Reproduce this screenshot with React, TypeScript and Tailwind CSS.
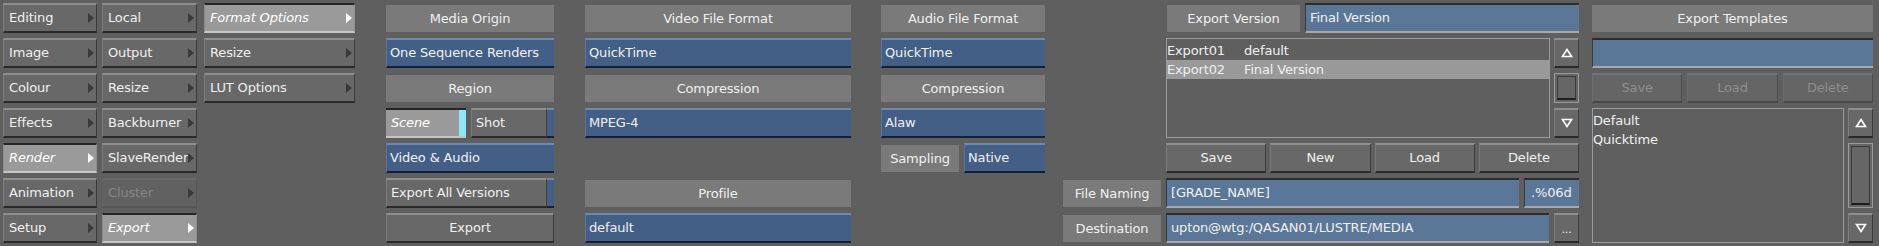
import type { ReactNode } from "react"

function Arrow({ light }: { light?: boolean }) {
  return (
    <span
      className={`h-0 w-0 shrink-0 border-y-[5px] border-l-[6px] border-y-transparent ${
        light ? "border-l-white" : "border-l-[#3a3a3a]"
      }`}
    />
  )
}

function MenuBtn({ label, state }: { label: string; state?: "on" | "off" }) {
  if (state === "on") {
    return (
      <div className="flex h-[30px] items-center justify-between border border-t-2 border-b-2 border-t-[#262626] border-l-[#8c8c8c] border-r-[#8c8c8c] border-b-[#c6c6c6] bg-[#9a9a9a] pl-[5px] pr-[2px] italic text-white">
        <span>{label}</span>
        <Arrow light />
      </div>
    )
  }
  if (state === "off") {
    return (
      <div className="flex h-[30px] items-center justify-between border border-t-2 border-b-2 border-t-[#6a6a6a] border-l-[#626262] border-r-[#565656] border-b-[#555555] bg-[#616161] pl-[5px] pr-[2px] text-[#868686]">
        <span>{label}</span>
        <Arrow />
      </div>
    )
  }
  return (
    <div className="flex h-[30px] items-center justify-between border border-t-2 border-b-2 border-t-[#8e8e8e] border-l-[#7c7c7c] border-r-[#3c3c3c] border-b-[#2a2a2a] bg-[#686868] pl-[5px] pr-[2px]">
      <span className="whitespace-nowrap">{label}</span>
      <Arrow />
    </div>
  )
}

function Btn({ children, className = "" }: { children?: ReactNode; className?: string }) {
  return (
    <div
      className={`flex h-[30px] items-center justify-center border border-t-2 border-b-2 border-t-[#8e8e8e] border-l-[#7c7c7c] border-r-[#3c3c3c] border-b-[#2a2a2a] bg-[#686868] ${className}`}
    >
      {children}
    </div>
  )
}

function DimBtn({ children }: { children: ReactNode }) {
  return (
    <div className="flex h-[30px] items-center justify-center border border-t-2 border-b-2 border-t-[#747474] border-l-[#6c6c6c] border-r-[#4c4c4c] border-b-[#484848] bg-[#656565] text-[#8e8e8e]">
      {children}
    </div>
  )
}

function Label({ children, className = "" }: { children: ReactNode; className?: string }) {
  return (
    <div className={`mt-[2px] mb-[1px] flex h-[27px] items-center justify-center bg-[#7a7a7a] ${className}`}>
      {children}
    </div>
  )
}

function Blue({ children, className = "" }: { children?: ReactNode; className?: string }) {
  return (
    <div
      className={`flex h-[30px] items-center border-t-2 border-b-2 border-l border-t-[#6f89ae] border-l-[#5a739a] border-b-[#14203a] bg-[#445f86] pl-[3px] ${className}`}
    >
      {children}
    </div>
  )
}

function Field({ children, className = "" }: { children?: ReactNode; className?: string }) {
  return (
    <div
      className={`flex h-[30px] items-center border-t-2 border-l border-b-2 border-t-[#2c2c2c] border-l-[#3a3a3a] border-b-[#a4a9b0] bg-[#5a7797] pl-[4px] ${className}`}
    >
      {children}
    </div>
  )
}

function Up() {
  return (
    <svg width="12" height="10" viewBox="0 0 12 10">
      <path d="M6 1.5 L10.5 8.5 H1.5 Z" fill="none" stroke="#ffffff" strokeWidth="1.6" />
    </svg>
  )
}

function Down() {
  return (
    <svg width="12" height="10" viewBox="0 0 12 10">
      <path d="M6 8.5 L10.5 1.5 H1.5 Z" fill="none" stroke="#ffffff" strokeWidth="1.6" />
    </svg>
  )
}

function Scroll() {
  return (
    <div className="flex h-full w-[25px] shrink-0 flex-col gap-[5px]">
      <Btn>
        <Up />
      </Btn>
      <div className="flex-1 border border-[#9a9a9a] bg-[#666666] p-[2px]">
        <div className="h-full border border-[#3a3a3a] border-b-2 border-b-[#1e1e1e] bg-[#666666]" />
      </div>
      <Btn>
        <Down />
      </Btn>
    </div>
  )
}

const Empty = () => <div className="h-[30px]" />

export default function App() {
  return (
    <div className="flex h-[246px] w-[1879px] overflow-hidden bg-[#5f5f5f] pl-[3px] pt-[3px] font-['DejaVu_Sans',sans-serif] text-[13px] tracking-[-0.15px] text-[#f0f0f0]">
      <div className="flex w-[94px] flex-col gap-[5px]">
        <MenuBtn label="Editing" />
        <MenuBtn label="Image" />
        <MenuBtn label="Colour" />
        <MenuBtn label="Effects" />
        <MenuBtn label="Render" state="on" />
        <MenuBtn label="Animation" />
        <MenuBtn label="Setup" />
      </div>

      <div className="ml-[5px] flex w-[95px] flex-col gap-[5px]">
        <MenuBtn label="Local" />
        <MenuBtn label="Output" />
        <MenuBtn label="Resize" />
        <MenuBtn label="Backburner" />
        <MenuBtn label="SlaveRender" />
        <MenuBtn label="Cluster" state="off" />
        <MenuBtn label="Export" state="on" />
      </div>

      <div className="ml-[7px] flex w-[151px] flex-col gap-[5px]">
        <MenuBtn label="Format Options" state="on" />
        <MenuBtn label="Resize" />
        <MenuBtn label="LUT Options" />
      </div>

      <div className="ml-[31px] flex w-[168px] flex-col gap-[5px]">
        <Label>Media Origin</Label>
        <Blue>One Sequence Renders</Blue>
        <Label>Region</Label>
        <div className="flex h-[30px] gap-[5px]">
          <div className="flex w-[80px] border-t-2 border-b-2 border-t-[#262626] border-b-[#c6c6c6] bg-[#9a9a9a]">
            <span className="flex flex-1 items-center pl-[5px] italic text-white">Scene</span>
            <span className="w-[7px] bg-[#8fe8fa]" />
          </div>
          <div className="flex flex-1">
            <Btn className="flex-1 !justify-start pl-[4px]">Shot</Btn>
            <div className="w-[7px] border-t-2 border-b-2 border-t-[#6f89ae] border-b-[#14203a] bg-[#445f86]" />
          </div>
        </div>
        <Blue>Video &amp; Audio</Blue>
        <div className="flex h-[30px]">
          <Btn className="flex-1 !justify-start pl-[4px]">Export All Versions</Btn>
          <div className="w-[7px] border-t-2 border-b-2 border-t-[#6f89ae] border-b-[#14203a] bg-[#445f86]" />
        </div>
        <Btn>Export</Btn>
      </div>

      <div className="ml-[31px] flex w-[266px] flex-col gap-[5px]">
        <Label>Video File Format</Label>
        <Blue>QuickTime</Blue>
        <Label>Compression</Label>
        <Blue>MPEG-4</Blue>
        <Empty />
        <Label>Profile</Label>
        <Blue>default</Blue>
      </div>

      <div className="ml-[30px] flex w-[164px] flex-col gap-[5px]">
        <Label>Audio File Format</Label>
        <Blue>QuickTime</Blue>
        <Label>Compression</Label>
        <Blue>Alaw</Blue>
        <div className="flex h-[30px] gap-[5px]">
          <Label className="w-[78px] shrink-0">Sampling</Label>
          <Blue className="flex-1">Native</Blue>
        </div>
      </div>

      <div className="ml-[18px] flex w-[98px] flex-col gap-[5px]">
        <Empty />
        <Empty />
        <Empty />
        <Empty />
        <Empty />
        <Label>File Naming</Label>
        <Label>Destination</Label>
      </div>

      <div className="ml-[5px] flex w-[413px] flex-col gap-[5px]">
        <div className="flex h-[30px] gap-[5px]">
          <Label className="ml-[1px] w-[133px] shrink-0">Export Version</Label>
          <Field className="flex-1">Final Version</Field>
        </div>
        <div className="flex h-[100px] gap-[4px]">
          <div className="flex-1 border border-[#9c9c9c] pt-[2px]">
            <div className="flex h-[19px] items-center">
              <span className="w-[77px]">Export01</span>
              <span>default</span>
            </div>
            <div className="flex h-[19px] items-center bg-[#999999]">
              <span className="w-[77px]">Export02</span>
              <span>Final Version</span>
            </div>
          </div>
          <Scroll />
        </div>
        <div className="grid h-[30px] grid-cols-4 gap-[4px]">
          <Btn>Save</Btn>
          <Btn>New</Btn>
          <Btn>Load</Btn>
          <Btn>Delete</Btn>
        </div>
        <div className="flex h-[30px] gap-[5px]">
          <Field className="flex-1">[GRADE_NAME]</Field>
          <Field className="w-[55px] pl-[6px]">.%06d</Field>
        </div>
        <div className="flex h-[30px] gap-[5px]">
          <Field className="flex-1">upton@wtg:/QASAN01/LUSTRE/MEDIA</Field>
          <Btn className="w-[25px] !items-end pb-[3px] text-[11px]">...</Btn>
        </div>
      </div>

      <div className="ml-[13px] flex w-[281px] flex-col gap-[5px]">
        <Label>Export Templates</Label>
        <Field />
        <div className="grid h-[30px] grid-cols-3 gap-[5px]">
          <DimBtn>Save</DimBtn>
          <DimBtn>Load</DimBtn>
          <DimBtn>Delete</DimBtn>
        </div>
        <div className="flex h-[135px] gap-[4px]">
          <div className="flex-1 border border-[#9c9c9c] pt-[2px]">
            <div className="flex h-[19px] items-center">Default</div>
            <div className="flex h-[19px] items-center">Quicktime</div>
          </div>
          <Scroll />
        </div>
      </div>
    </div>
  )
}
